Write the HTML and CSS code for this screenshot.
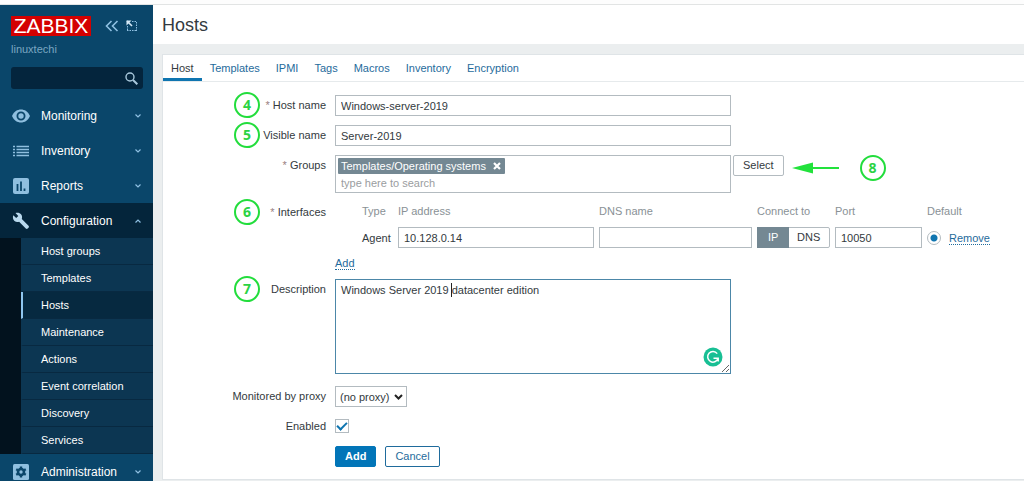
FILE: index.html
```html
<!DOCTYPE html>
<html lang="en">
<head>
<meta charset="utf-8">
<meta name="viewport" content="width=device-width, initial-scale=1">
<title>Hosts</title>
<link rel="stylesheet" href="styles.css">
</head>
<body>
<div class="topline"></div>
<div class="app">
  <aside class="sidebar">
    <div class="brand">
      <a class="logo" href="#">ZABBIX</a>
      <button class="icon-btn" type="button" aria-label="Collapse sidebar">
        <svg width="14" height="12" viewBox="0 0 14 12" fill="none" stroke="#8fc0e2" stroke-width="1.6"><path d="M6.500 1 1.500 6l5 5M12.500 1l-5 5 5 5"/></svg>
      </button>
      <button class="icon-btn" type="button" aria-label="Hide sidebar">
        <svg width="12" height="12" viewBox="0 0 12 12" fill="none" stroke="#8fc0e2"><path d="M6 1.500h5M10.500 2v9M10 10.500H1M1.500 10V6" stroke-dasharray="1.500 1"/><path d="M1 1l5 5" stroke="#d5e9f7" stroke-width="1.600"/><path d="M.5.5h5L.5 5.500z" fill="#d5e9f7" stroke="none"/></svg>
      </button>
    </div>
    <div class="server">linuxtechi</div>
    <form class="search">
      <input type="text" aria-label="Search">
      <button class="icon-btn" type="button" aria-label="Search">
        <svg width="13" height="13" viewBox="0 0 13 13" fill="none" stroke="#a9c8dc"><circle cx="5" cy="5" r="4" stroke-width="1.400"/><path d="M8 8l4.300 4.300" stroke-width="2"/></svg>
      </button>
    </form>
    <nav class="menu">
      <a class="item" href="#">
        <svg class="ico" viewBox="0 0 20 20"><path fill="#8fbfdf" fill-rule="evenodd" d="M1 10C3 5.500 6.300 3.500 10 3.500S17 5.500 19 10c-2 4.500-5.300 6.500-9 6.500S3 14.500 1 10zm9-4.500a4.500 4.500 0 1 0 0 9 4.500 4.500 0 0 0 0-9z"/><circle cx="10" cy="10" r="2.700" fill="#8fbfdf"/></svg>
        <span>Monitoring</span>
        <svg class="chev" viewBox="0 0 8 6"><path d="M1.500 1.500 4 4l2.500-2.500"/></svg>
      </a>
      <a class="item" href="#">
        <svg class="ico" viewBox="0 0 20 20" stroke="#8fbfdf" stroke-width="1.500"><path d="M2 5.500h2M2 8.500h2M2 11.500h2M2 14.500h2M5.500 5.500H18M5.500 8.500H18M5.500 11.500H18M5.500 14.500H18"/></svg>
        <span>Inventory</span>
        <svg class="chev" viewBox="0 0 8 6"><path d="M1.500 1.500 4 4l2.500-2.500"/></svg>
      </a>
      <a class="item" href="#">
        <svg class="ico" viewBox="0 0 20 20"><rect x="2" y="2" width="16" height="16" rx="2" fill="#8fbfdf"/><path d="M6.500 8v7M10 5.500V15M13.500 12.500V15" stroke="#0a466a" stroke-width="1.800"/></svg>
        <span>Reports</span>
        <svg class="chev" viewBox="0 0 8 6"><path d="M1.500 1.500 4 4l2.500-2.500"/></svg>
      </a>
      <a class="item open" href="#">
        <svg class="ico" viewBox="0 0 20 20"><path fill="#b9d9ee" d="M2.300 4.200 5.200 7.100 7.300 5 4.500 2.100c2.300-.8 4.500-.1 5.700 1.500 1 1.400 1.100 3 .6 4.400l6.700 6.800c.6.600.6 1.300 0 1.900l-.8.800c-.6.600-1.300.6-1.900 0L8.100 10.700c-1.500.6-3.300.4-4.600-.8C1.900 8.400 1.500 6.100 2.300 4.200z"/></svg>
        <span>Configuration</span>
        <svg class="chev" viewBox="0 0 8 6"><path d="M1.500 4.500 4 2l2.500 2.500"/></svg>
      </a>
      <div class="submenu">
        <a href="#">Host groups</a>
        <a href="#">Templates</a>
        <a class="selected" href="#">Hosts</a>
        <a href="#">Maintenance</a>
        <a href="#">Actions</a>
        <a href="#">Event correlation</a>
        <a href="#">Discovery</a>
        <a href="#">Services</a>
      </div>
      <a class="item" href="#">
        <svg class="ico" viewBox="0 0 20 20"><rect x="2" y="2" width="16" height="16" rx="1.500" fill="#8fbfdf"/><circle cx="10" cy="10" r="3" fill="none" stroke="#0a466a" stroke-width="2.600"/><path d="M10 4.500v2M10 13.500v2M5.200 7.200l1.800 1M13 11.800l1.800 1M5.200 12.800l1.800-1M13 8.200l1.800-1" stroke="#0a466a" stroke-width="2.400"/></svg>
        <span>Administration</span>
        <svg class="chev" viewBox="0 0 8 6"><path d="M1.500 1.500 4 4l2.500-2.500"/></svg>
      </a>
    </nav>
  </aside>

  <main class="main">
    <header class="page-head"><h1>Hosts</h1></header>
    <section class="card">
      <nav class="tabs">
        <a class="active" href="#">Host</a>
        <a href="#">Templates</a>
        <a href="#">IPMI</a>
        <a href="#">Tags</a>
        <a href="#">Macros</a>
        <a href="#">Inventory</a>
        <a href="#">Encryption</a>
      </nav>
      <form class="form">
        <div class="row">
          <b class="step">4</b>
          <label class="label" for="host"><i>*</i> Host name</label>
          <input class="text wide" id="host" type="text" value="Windows-server-2019">
        </div>
        <div class="row">
          <b class="step">5</b>
          <label class="label" for="visible">Visible name</label>
          <input class="text wide" id="visible" type="text" value="Server-2019">
        </div>
        <div class="row">
          <label class="label" for="groups"><i>*</i> Groups</label>
          <div class="groups">
            <div class="multi wide">
              <span class="tag">Templates/Operating systems
                <button class="icon-btn" type="button" aria-label="Remove group"><svg width="8" height="8" viewBox="0 0 8 8" stroke="#fff" stroke-width="2.200"><path d="M1 1l6 6M7 1 1 7"/></svg></button>
              </span>
              <input id="groups" type="text" placeholder="type here to search">
            </div>
            <button class="btn grey" type="button">Select</button>
            <div class="pointer">
              <svg width="47" height="12" viewBox="0 0 47 12"><path d="M18 6h29" stroke="#22e23c" stroke-width="2"/><path d="M0 6 21 .5v11z" fill="#22e23c"/></svg>
              <b class="ring">8</b>
            </div>
          </div>
        </div>
        <div class="row">
          <b class="step">6</b>
          <span class="label"><i>*</i> Interfaces</span>
          <div class="interfaces">
            <table>
              <colgroup><col class="c-type"><col class="c-ip"><col class="c-dns"><col class="c-conn"><col class="c-port"><col class="c-def"><col></colgroup>
              <thead>
                <tr><th>Type</th><th>IP address</th><th>DNS name</th><th>Connect to</th><th>Port</th><th colspan="2">Default</th></tr>
              </thead>
              <tbody>
                <tr>
                  <td>Agent</td>
                  <td><input class="text" type="text" aria-label="IP address" value="10.128.0.14"></td>
                  <td><input class="text" type="text" aria-label="DNS name"></td>
                  <td>
                    <div class="toggle">
                      <input type="radio" name="conn" id="c-ip" checked><label for="c-ip">IP</label>
                      <input type="radio" name="conn" id="c-dns"><label for="c-dns">DNS</label>
                    </div>
                  </td>
                  <td><input class="text" type="text" aria-label="Port" value="10050"></td>
                  <td><input class="radio" type="radio" aria-label="Default" checked></td>
                  <td><a class="link" href="#">Remove</a></td>
                </tr>
              </tbody>
            </table>
            <a class="link" href="#">Add</a>
          </div>
        </div>
        <div class="row">
          <b class="step">7</b>
          <label class="label" for="desc">Description</label>
          <div class="area wide">
            <textarea id="desc">Windows Server 2019 datacenter edition</textarea>
            <span class="caret"></span>
            <svg class="checker" width="20" height="20" viewBox="0 0 20 20" fill="none"><circle cx="10" cy="10" r="9.500" fill="#18bf94"/><path d="M14.200 6.600A5.300 5.300 0 1 0 15 11.500M10.500 11.200h4.700v3.300" stroke="#fff" stroke-width="1.500"/></svg>
          </div>
        </div>
        <div class="row proxy">
          <label class="label" for="proxy">Monitored by proxy</label>
          <div class="select">
            <select id="proxy"><option>(no proxy)</option></select>
            <svg width="9" height="6" viewBox="0 0 9 6" fill="none" stroke="#222" stroke-width="2"><path d="M1 1l3.500 3.500L8 1"/></svg>
          </div>
        </div>
        <div class="row">
          <label class="label" for="enabled">Enabled</label>
          <input class="check" id="enabled" type="checkbox" checked>
        </div>
        <div class="row">
          <span class="label"></span>
          <div class="actions">
            <button class="btn primary" type="button">Add</button>
            <button class="btn" type="button">Cancel</button>
          </div>
        </div>
      </form>
    </section>
  </main>
</div>
</body>
</html>
```
FILE: styles.css
```css
* { box-sizing: border-box; }
body {
  margin: 0;
  height: 100vh;
  overflow: hidden;
  display: flex;
  flex-direction: column;
  background: #ebeeef;
  color: #333a40;
  font: 11px/14px "Liberation Sans", Arial, sans-serif;
}
a { color: inherit; text-decoration: none; }
input, button, select, textarea { font: inherit; color: inherit; }
svg { display: block; }
.icon-btn { padding: 0; border: 0; background: none; display: flex; cursor: pointer; }
.topline { flex: none; height: 5px; background: #fdfdfd; border-bottom: 1px solid #e2e4e4; }
.app { flex: 1; min-height: 0; display: flex; }

/* Sidebar */
.sidebar { flex: none; width: 153px; background: #0a466a; color: #fff; overflow: hidden; }
.brand { display: flex; align-items: center; padding: 11px 0 0 11px; }
.logo {
  width: 80px;
  margin-right: 14px;
  background: #d40000;
  color: #fff;
  font-size: 21px;
  line-height: 20px;
  text-align: center;
}
.brand .icon-btn + .icon-btn { margin-left: 7px; }
.server { padding: 6px 11px 0; color: #7ba6c2; }
.search {
  display: flex;
  align-items: center;
  height: 22px;
  margin: 11px 10px 9px 11px;
  padding-right: 5px;
  background: #04253d;
  border-radius: 3px;
}
.search input { flex: 1; min-width: 0; height: 20px; padding: 0 6px; border: 0; background: none; outline: 0; }
.item { display: flex; align-items: center; height: 35px; padding: 0 10px 0 11px; font-size: 12px; line-height: 16px; }
.item span { flex: 1; }
.ico { width: 20px; height: 20px; margin-right: 10px; }
.chev { width: 8px; height: 6px; fill: none; stroke: #8fc0e2; stroke-width: 1.2; margin-right: 1px; }
.item.open { background: #04253b; }
.submenu { padding-left: 21px; background: #02121e; }
.submenu a {
  display: block;
  height: 27px;
  padding-left: 18px;
  border-left: 2px solid #0c3652;
  border-bottom: 1px solid #082941;
  background: #0c3652;
  line-height: 26px;
}
.submenu .selected { background: #062940; border-left-color: #8fc6ef; }

/* Page */
.main { flex: 1; min-width: 0; }
.page-head { height: 39px; padding: 0 9px; background: #fff; }
h1 { margin: 0; font-size: 18px; font-weight: 400; line-height: 40px; }
.card { margin: 10px 0 0 9px; background: #fff; border: 1px solid #dfe4e7; border-right: 0; }
.tabs { display: flex; height: 27px; border-bottom: 1px solid #e6eaec; }
.tabs a { padding: 0 8px; line-height: 26px; color: #1f6b9c; }
.tabs .active { color: #333a40; border-bottom: 3px solid #0f75b0; }

/* Form */
.form { display: flex; flex-direction: column; gap: 9px; padding: 13px 0 12px; }
.row { position: relative; display: grid; grid-template-columns: 163px minmax(0, 1fr); column-gap: 9px; align-items: start; }
.label { text-align: right; line-height: 21px; }
.label i { color: #9a7f7f; font-style: normal; }
.wide { width: 100%; max-width: 396px; }
.step, .ring {
  width: 26px;
  height: 26px;
  border: 2px solid #22dd3c;
  border-radius: 50%;
  color: #2bd344;
  font: 700 14px/22px "Open Sans", sans-serif;
  text-align: center;
}
.step { position: absolute; left: 71px; top: -3px; }
.text { height: 21px; padding: 0 5px; border: 1px solid #b3bbc0; background: #fff; outline: 0; }
.groups { display: flex; align-items: flex-start; }
.multi { height: 38px; padding: 2px; border: 1px solid #b3bbc0; }
.multi input { display: block; width: 100%; height: 17px; padding: 0 3px; border: 0; outline: 0; background: none; }
.multi input::placeholder { color: #9a9da0; opacity: 1; }
.tag { display: inline-flex; align-items: center; gap: 7px; height: 16px; padding: 0 4px 0 3px; background: #748893; color: #fff; vertical-align: top; border-radius: 1px; }
.btn { height: 21px; padding: 0 9px; border: 1px solid #1f6b9c; border-radius: 2px; background: #fff; color: #1f6b9c; line-height: 19px; cursor: pointer; }
.btn.grey { margin-left: 2px; border-color: #b3bbc0; color: #333a40; }
.btn.primary { background: #0275b8; border-color: #0275b8; color: #fff; font-weight: 700; }
.pointer { display: flex; align-items: center; gap: 21px; margin-left: 8px; }
table { width: 618px; max-width: 100%; margin: 0 0 8px 27px; border-collapse: collapse; table-layout: fixed; }
th { height: 21px; padding: 0; font-weight: 400; line-height: 19px; vertical-align: top; color: #899196; text-align: left; }
td { padding: 4px 5px 0 0; }
td:first-child { padding-right: 0; }
.c-type { width: 36px; }
.c-ip { width: 201px; }
.c-dns { width: 158px; }
.c-conn { width: 78px; }
.c-port { width: 92px; }
.c-def { width: 22px; }
td .text { display: block; width: 100%; }
.toggle { display: flex; height: 21px; border: 1px solid #b3bbc0; border-radius: 2px; line-height: 19px; text-align: center; }
.toggle input { position: absolute; opacity: 0; pointer-events: none; }
.toggle label { flex: 3 0 0; }
.toggle label:last-child { flex-grow: 4; }
.toggle input:checked + label { background: #748893; color: #fff; box-shadow: 0 0 0 1px #748893; }
.radio { appearance: none; display: block; width: 14px; height: 14px; margin: 0; border: 1px solid #b3bbc0; border-radius: 50%; background: radial-gradient(circle, #0f75b0 0 3px, #fff 4px); }
.link { color: #1f6b9c; border-bottom: 1px dotted #1f6b9c; }
.area { position: relative; }
textarea { display: block; width: 100%; height: 95px; padding: 3px 5px; border: 1px solid #4c87a8; outline: 0; resize: vertical; background: #fff; }
.caret { position: absolute; left: 116px; top: 4px; width: 1px; height: 14px; background: #222; }
.checker { position: absolute; right: 8px; bottom: 7px; }
.proxy { margin-top: 3px; }
.select { position: relative; width: 72px; }
select { appearance: none; width: 100%; height: 21px; padding: 0 4px; border: 1px solid #b3bbc0; border-radius: 0; background: #fff; }
.select svg { position: absolute; right: 4px; top: 8px; pointer-events: none; }
.check {
  appearance: none;
  width: 14px;
  height: 14px;
  margin: 3px 0 0;
  border: 1px solid #b3bbc0;
  display: grid;
  place-items: center;
}
.check:checked::before { content: ""; width: 8px; height: 4px; border: solid #0f75b0; border-width: 0 0 2px 2px; transform: translateY(-1px) rotate(-45deg); }
.actions { display: flex; gap: 9px; }
```
